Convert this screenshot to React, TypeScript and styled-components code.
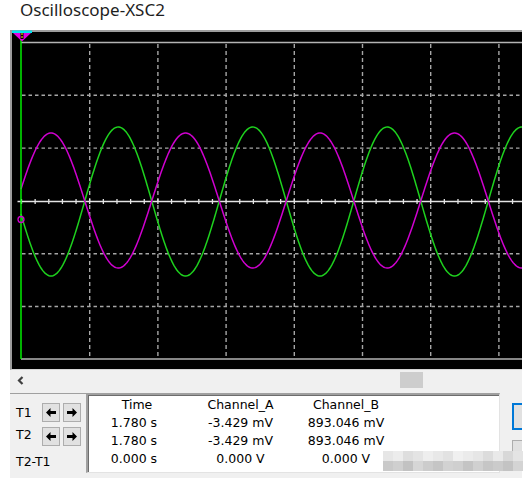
import React from "react";
import styled, { createGlobalStyle } from "styled-components";

const GlobalStyle = createGlobalStyle`
  html, body { margin: 0; padding: 0; background: #fff; }
  body { font-family: "DejaVu Sans", sans-serif; }
`;

const Page = styled.div`
  position: relative;
  width: 530px;
  height: 487px;
  background: #fff;
  overflow: hidden;
`;

const Title = styled.div`
  box-sizing: border-box;
  height: 30px;
  padding: 1px 0 0 20px;
  font-family: "Noto Sans", sans-serif;
  font-size: 17px;
  line-height: 17px;
  color: #1e1e1e;
`;

const Window = styled.div`
  margin-left: 10px;
  width: 512px;
`;

const ScopeFrame = styled.div`
  position: relative;
  box-sizing: border-box;
  height: 340px;
  border-top: 2px solid #9c9c9c;
  border-left: 2px solid #9c9c9c;
  border-bottom: 1px solid #d4d4d4;
  background: #000;
`;

const ScreenSvg = styled.svg`
  display: block;
  width: 510px;
  height: 337px;
`;

const Marker = styled.svg`
  position: absolute;
  left: 0px;
  top: -2px;
  width: 21px;
  height: 12px;
`;

const Scrollbar = styled.div`
  display: flex;
  align-items: center;
  height: 20px;
  background: #f0f0f0;
`;

const ScrollArrow = styled.div`
  width: 20px;
  height: 20px;
  display: flex;
  align-items: center;
  justify-content: center;
`;

const Thumb = styled.div<{ $offset: number }>`
  margin-left: ${(p) => p.$offset}px;
  width: 23px;
  height: 16px;
  background: #cdcdcd;
`;

const Panel = styled.div`
  display: flex;
  align-items: flex-start;
  box-sizing: border-box;
  height: 88px;
  padding-top: 3px;
  background: #f0f0f0;
  font-family: "DejaVu Sans", sans-serif;
  font-size: 12.5px;
  color: #000;
`;

const CursorGroup = styled.div`
  box-sizing: border-box;
  width: 76px;
  height: 82px;
  border-top: 1px solid #a0a0a0;
  padding: 9px 0 0 6px;
`;

const CursorRow = styled.div<{ $gap?: number }>`
  display: flex;
  align-items: center;
  height: 19px;
  margin-bottom: ${(p) => p.$gap ?? 0}px;
`;

const CursorLabel = styled.div<{ $lift?: number }>`
  width: 26px;
  line-height: 15px;
  margin-top: ${(p) => -(p.$lift ?? 0)}px;
`;

const StepButton = styled.div`
  box-sizing: border-box;
  width: 18px;
  height: 19px;
  margin-right: 3px;
  border: 1px solid #adadad;
  background: #e1e1e1;
  display: flex;
  align-items: center;
  justify-content: center;
`;

const DiffLabel = styled.div`
  margin-top: 8px;
  line-height: 15px;
`;

const DataBox = styled.div`
  box-sizing: border-box;
  width: 414px;
  height: 80px;
  background: #fff;
  border-top: 2px solid #a0a0a0;
  border-left: 2px solid #a0a0a0;
  border-right: 1px solid #e3e3e3;
  border-bottom: 1px solid #e3e3e3;
  box-shadow: inset 1px 1px 0 #6d6d6d;
  display: grid;
  grid-template-columns: 92px 121px 90px;
  grid-auto-rows: 18px;
  padding-top: 1px;
`;

const Cell = styled.div<{ $shift?: number }>`
  text-align: center;
  line-height: 18px;
  white-space: nowrap;
  transform: translateX(${(p) => p.$shift ?? 0}px);
`;

const SideButtons = styled.div`
  margin-left: 12px;
  width: 10px;
  overflow: hidden;
  display: flex;
  flex-direction: column;
`;

const SideButton = styled.div<{ $focused?: boolean }>`
  box-sizing: border-box;
  flex: none;
  width: 24px;
  height: 27px;
  margin-top: 10px;
  background: #e1e1e1;
  border: ${(p) => (p.$focused ? "2px solid #0078d7" : "1px solid #adadad")};
`;

const Watermark = styled.svg`
  position: absolute;
  left: 383px;
  top: 450px;
  width: 140px;
  height: 22px;
`;

const Arrow = ({ dir }: { dir: "left" | "right" }) => (
  <svg width="10" height="9" viewBox="0 0 10 9">
    <path
      d="M0 4.5 L4.5 0 V3 H10 V6 H4.5 V9 Z"
      fill="#000"
      transform={dir === "right" ? "translate(10 0) scale(-1 1)" : undefined}
    />
  </svg>
);

const T = 134.5;
const P = 51;
function wave(center: number, amp: number, sign: number) {
  const pts: string[] = [];
  for (let x = 21; x <= 522; x += 1) {
    const y = center + sign * amp * Math.cos((2 * Math.PI * (x - P)) / T);
    pts.push(`${x === 21 ? "M" : "L"}${x} ${y.toFixed(2)}`);
  }
  return pts.join(" ");
}

const greenPath = wave(201.5, 74.5, 1);
const magentaPath = wave(200.5, 67.5, -1);

const vLines = Array.from({ length: 7 }, (_, k) => 21.5 + 68.2 * (k + 1));
const hLines = [95.3, 148.1, 253.7, 306.5];
const ticks: number[] = [];
for (let x = 21.5; x < 522; x += 13.64) ticks.push(x);

const wmShades = [
  ["#e6e6e6", "#ececec", "#dedede", "#e4e4e4", "#eeeeee", "#e8e8e8", "#e2e2e2", "#f0f0f0", "#ebebeb", "#e6e6e6", "#dcdcdc", "#e9e9e9", "#d8d8d8", "#e4e4e4"],
  ["#c9c9c9", "#cfcfcf", "#c2c2c2", "#d6d6d6", "#cccccc", "#c5c5c5", "#d2d2d2", "#cfcfcf", "#c4c4c4", "#d0d0d0", "#c6c6c6", "#cbcbcb", "#c3c3c3", "#d4d4d4"],
];

const rows = [
  ["Time", "Channel_A", "Channel_B"],
  ["1.780 s", "-3.429 mV", "893.046 mV"],
  ["1.780 s", "-3.429 mV", "893.046 mV"],
  ["0.000 s", "0.000 V", "0.000 V"],
];

export default function App() {
  return (
    <Page>
      <GlobalStyle />
      <Title>Oscilloscope-XSC2</Title>
      <Window>
        <ScopeFrame>
          <ScreenSvg viewBox="12 32 510 337">
            <rect x="12" y="32" width="510" height="337" fill="#000" />
            {vLines.map((x) => (
              <line key={x} x1={x} y1={44} x2={x} y2={358} stroke="#a6a6a6" strokeWidth="1.4" strokeDasharray="4 3" />
            ))}
            {hLines.map((y) => (
              <line key={y} x1={22} y1={y} x2={522} y2={y} stroke="#a6a6a6" strokeWidth="1.4" strokeDasharray="3.5 3" />
            ))}
            <line x1={21} y1={42.5} x2={522} y2={42.5} stroke="#b4b4b4" strokeWidth="1.5" />
            <line x1={21} y1={359} x2={522} y2={359} stroke="#b4b4b4" strokeWidth="1.5" />
            <line x1={17.5} y1={201.5} x2={522} y2={201.5} stroke="#e4e4e4" strokeWidth="1.6" />
            {ticks.map((x) => (
              <line key={x} x1={x} y1={199} x2={x} y2={204} stroke="#e4e4e4" strokeWidth="1.3" />
            ))}
            <path d={greenPath} fill="none" stroke="#1ed21e" strokeWidth="1.5" />
            <path d={magentaPath} fill="none" stroke="#d000d0" strokeWidth="1.5" />
            <line x1={21} y1={32} x2={21} y2={359} stroke="#00ff00" strokeWidth="1.4" />
            <circle cx={21} cy={219.5} r={3} fill="none" stroke="#d000d0" strokeWidth="1.3" />
          </ScreenSvg>
          <Marker viewBox="0 0 21 12">
            <rect x="0" y="0.5" width="20" height="2.5" fill="#00e5ee" />
            <path d="M1 3 L19 3 L10 11.5 Z" fill="#e000e0" />
            <rect x="8.5" y="3" width="3" height="6" fill="#000" />
            <rect x="9" y="3.5" width="2" height="1" fill="#ffff00" />
            <rect x="9" y="6.5" width="2" height="1" fill="#ffff00" />
          </Marker>
        </ScopeFrame>
        <Scrollbar>
          <ScrollArrow>
            <svg width="7" height="9" viewBox="0 0 7 9">
              <path d="M5.5 1 L2 4.5 L5.5 8" fill="none" stroke="#404040" strokeWidth="2.2" />
            </svg>
          </ScrollArrow>
          <Thumb $offset={370} />
        </Scrollbar>
        <Panel>
          <CursorGroup>
            <CursorRow $gap={5}>
              <CursorLabel>T1</CursorLabel>
              <StepButton><Arrow dir="left" /></StepButton>
              <StepButton><Arrow dir="right" /></StepButton>
            </CursorRow>
            <CursorRow>
              <CursorLabel $lift={4}>T2</CursorLabel>
              <StepButton><Arrow dir="left" /></StepButton>
              <StepButton><Arrow dir="right" /></StepButton>
            </CursorRow>
            <DiffLabel>T2-T1</DiffLabel>
          </CursorGroup>
          <DataBox>
            {rows.map((r, i) =>
              r.map((c, j) => (
                <Cell key={`${i}-${j}`} $shift={i === 0 && j === 0 ? 3 : 0}>
                  {c}
                </Cell>
              ))
            )}
          </DataBox>
          <SideButtons>
            <SideButton $focused />
            <SideButton />
          </SideButtons>
        </Panel>
      </Window>
      <Watermark viewBox="0 0 140 22">
        {wmShades.map((row, ri) =>
          row.map((c, ci) => (
            <rect key={`${ri}-${ci}`} x={ci * 10} y={ri * 10 + 1} width="10" height="10" fill={c} />
          ))
        )}
      </Watermark>
    </Page>
  );
}
